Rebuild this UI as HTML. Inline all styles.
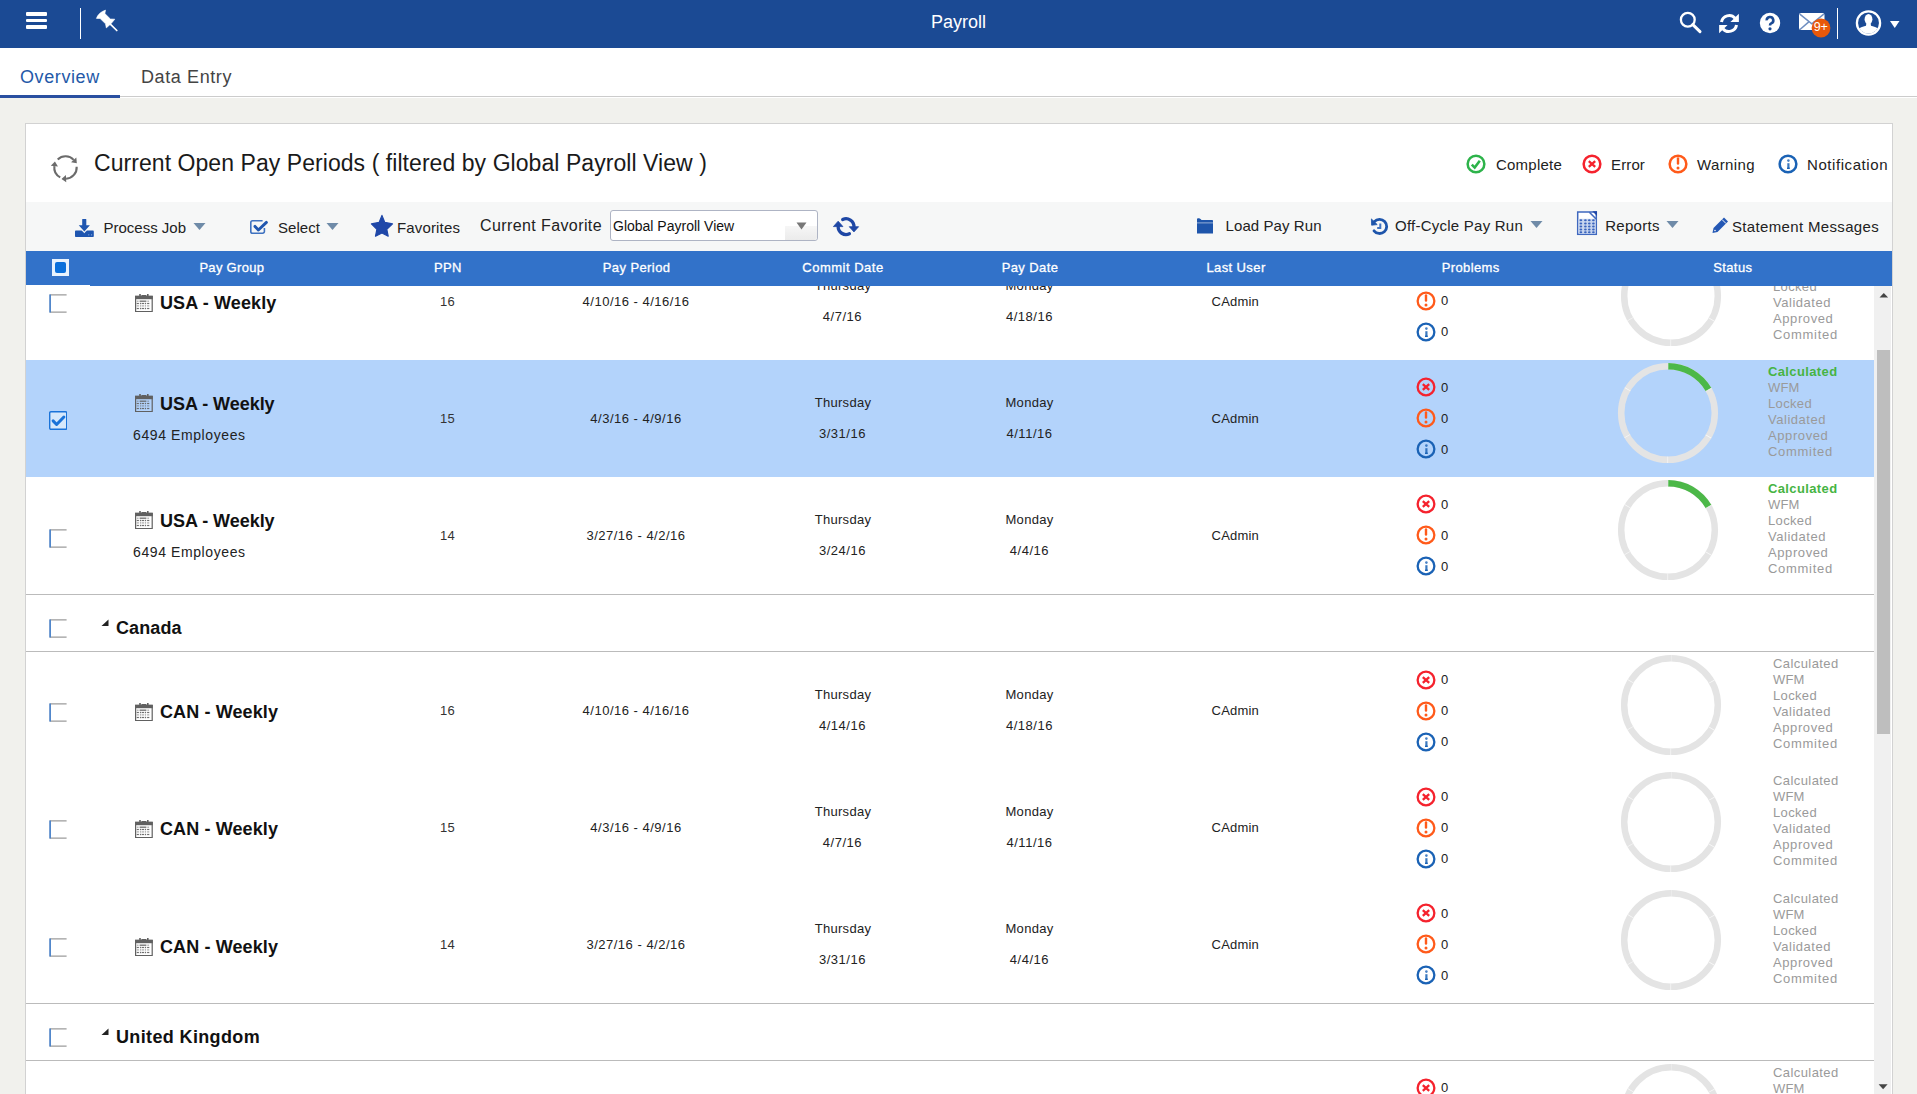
<!DOCTYPE html>
<html><head><meta charset="utf-8"><title>Payroll</title>
<style>
html,body{margin:0;padding:0;}
body{width:1917px;height:1094px;position:relative;overflow:hidden;background:#F1F1ED;font-family:"Liberation Sans", sans-serif;}
.t{position:absolute;white-space:pre;font-family:"Liberation Sans", sans-serif;}
.r{position:absolute;display:block;}
</style></head><body>
<div class="r" style="left:0px;top:0px;width:1917px;height:48px;background:#1B4A94;"></div><div class="r" style="left:26px;top:12px;width:21px;height:3.8px;background:#FFFFFF;border-radius:1px;"></div><div class="r" style="left:26px;top:18.8px;width:21px;height:3.6px;background:#FFFFFF;border-radius:1px;"></div><div class="r" style="left:26px;top:25.2px;width:21px;height:3.8px;background:#FFFFFF;border-radius:1px;"></div><div class="r" style="left:80px;top:8px;width:1px;height:31px;background:#FFFFFF;"></div><svg class="r" style="left:92px;top:6px;" width="30" height="30" viewBox="0 0 30 30"><path d="M4.4 12.4Q6.5 6.6 13.5 4.1L12.9 7.6L18.4 13L22.8 13.2L19.2 17.6L14.3 21.9L13.5 17.8L8.1 12.5z" fill="#fff" stroke="#fff" stroke-width="0.6" stroke-linejoin="round"/><path d="M17.8 17.6L24.8 24.5" stroke="#fff" stroke-width="1.7" stroke-linecap="round"/></svg><div class="t" style="left:858.50px;top:12.76px;width:200px;text-align:center;font-size:18px;line-height:18px;color:#FFFFFF;font-weight:normal;letter-spacing:0px;">Payroll</div><svg class="r" style="left:1678px;top:10px;" width="26" height="26" viewBox="0 0 26 26"><circle cx="9.8" cy="9.7" r="6.9" fill="none" stroke="#fff" stroke-width="2.3"/><path d="M14.8 14.6l7.2 7" stroke="#fff" stroke-width="3" stroke-linecap="round"/></svg><svg class="r" style="left:1716px;top:11px;" width="26" height="26" viewBox="0 0 26 26"><g transform="translate(13 12.5) scale(0.94) translate(-13 -13)"><g fill="none" stroke="#fff" stroke-width="3.2"><path d="M5 11.5A8.3 8.3 0 0 1 19.5 7.5"/><path d="M21 14.5A8.3 8.3 0 0 1 6.5 18.5"/></g><path d="M23.5 2.5v9h-9z" fill="#fff"/><path d="M2.5 23.5v-9h9z" fill="#fff"/></g></svg><svg class="r" style="left:1758px;top:11px;" width="24" height="24" viewBox="0 0 24 24"><circle cx="12" cy="12" r="10.2" fill="#fff"/><path d="M8.7 9.4a3.3 3.3 0 1 1 4.5 3c-1 .5-1.2 1.1-1.2 2.1" fill="none" stroke="#1B4A94" stroke-width="2.6"/><circle cx="12" cy="17.8" r="1.6" fill="#1B4A94"/></svg><svg class="r" style="left:1797px;top:11px;" width="30" height="22" viewBox="0 0 30 22"><rect x="2" y="2" width="25.5" height="17" rx="2" fill="#fff"/><path d="M2.8 3.2l12 9.6 12-9.6M3 18.5l8.8-7.6M27 18.5l-8.8-7.6" fill="none" stroke="#4A72B0" stroke-width="1.5" opacity="0.8"/></svg><svg class="r" style="left:1811px;top:18px;" width="20" height="20" viewBox="0 0 20 20"><circle cx="10" cy="10" r="9.4" fill="#E8580A"/></svg><div class="t" style="left:1805.60px;top:21.22px;width:30px;text-align:center;font-size:12.5px;line-height:12.5px;color:#FFFFFF;font-weight:normal;letter-spacing:-0.3px;">9+</div><div class="r" style="left:1837px;top:8px;width:1px;height:31px;background:#FFFFFF;"></div><svg class="r" style="left:1854px;top:9px;" width="30" height="30" viewBox="0 0 30 30"><defs><clipPath id="uc"><circle cx="14.5" cy="14" r="10.6"/></clipPath></defs><circle cx="14.5" cy="14" r="11.6" fill="none" stroke="#fff" stroke-width="2.3"/><g clip-path="url(#uc)" fill="#fff"><ellipse cx="14.5" cy="10.2" rx="3.9" ry="5.3"/><path d="M12.3 14.5h4.4l.3 2.2c3.5.8 6.5 2 8 3.5V30H4V20.2c1.5-1.5 4.5-2.7 8-3.5z"/></g></svg><svg class="r" style="left:1889px;top:20px;" width="12" height="9" viewBox="0 0 12 9"><path d="M1 1h9.5l-4.75 7z" fill="#fff"/></svg><div class="r" style="left:0px;top:48px;width:1917px;height:50px;background:#FFFFFF;"></div><div class="r" style="left:0px;top:96px;width:1917px;height:1px;background:#CCCCCC;"></div><div class="r" style="left:0px;top:95px;width:120px;height:3px;background:#2A4FA0;"></div><div class="t" style="left:20.00px;top:68.46px;font-size:18px;line-height:18px;color:#2459A8;font-weight:normal;letter-spacing:0.6px;">Overview</div><div class="t" style="left:141.00px;top:68.46px;font-size:18px;line-height:18px;color:#444444;font-weight:normal;letter-spacing:0.6px;">Data Entry</div><div class="r" style="left:25px;top:123px;width:1868px;height:1000px;background:#FFFFFF;box-sizing:border-box;border:1px solid #D2D2D2;"></div><svg class="r" style="left:45px;top:147px;" width="42" height="42" viewBox="0 0 42 42"><path d="M12.72 12.44A11.2 11.2 0 0 1 28.69 12.86" fill="none" stroke="#6B6B6B" stroke-width="2.1"/><path d="M31.32 10.41L31.83 16.23L26.06 15.32z" fill="#6B6B6B"/><path d="M31.67 19.72A11.2 11.2 0 0 1 21.09 31.68" fill="none" stroke="#6B6B6B" stroke-width="2.1"/><path d="M21.27 35.28L16.49 31.93L20.90 28.09z" fill="#6B6B6B"/><path d="M15.24 30.39A11.2 11.2 0 0 1 9.38 19.14" fill="none" stroke="#6B6B6B" stroke-width="2.1"/><path d="M5.81 18.70L9.94 14.57L12.96 19.57z" fill="#6B6B6B"/></svg><div class="t" style="left:94.00px;top:151.53px;font-size:23px;line-height:23px;color:#1A1A1A;font-weight:normal;letter-spacing:0.06px;">Current Open Pay Periods ( filtered by Global Payroll View )</div><svg class="r" style="left:1465.7px;top:153.8px;" width="20" height="20" viewBox="0 0 20 20"><circle cx="10" cy="10" r="8.35" fill="none" stroke="#2DB34A" stroke-width="2.5"/><path d="M5.8 10.6l2.9 3 5.1-6.8" fill="none" stroke="#2DB34A" stroke-width="2.6"/></svg><div class="t" style="left:1496.00px;top:157.30px;font-size:15px;line-height:15px;color:#222;font-weight:normal;letter-spacing:0.22px;">Complete</div><svg class="r" style="left:1581.9px;top:153.9px;" width="20" height="20" viewBox="0 0 20 20"><circle cx="10" cy="10" r="8.35" fill="none" stroke="#F5222D" stroke-width="2.5"/><path d="M6.8 7.1l6.4 5.8M13.2 7.1l-6.4 5.8" fill="none" stroke="#F5222D" stroke-width="2.3"/></svg><div class="t" style="left:1611.00px;top:157.30px;font-size:15px;line-height:15px;color:#222;font-weight:normal;letter-spacing:0.13px;">Error</div><svg class="r" style="left:1668.4px;top:153.8px;" width="20" height="20" viewBox="0 0 20 20"><circle cx="10" cy="10" r="8.35" fill="none" stroke="#FF5A1A" stroke-width="2.5"/><path d="M10 4.4v5.2" stroke="#FF5A1A" stroke-width="2.4" stroke-linecap="round"/><circle cx="10" cy="14.1" r="1.5" fill="#FF5A1A"/></svg><div class="t" style="left:1697.00px;top:157.30px;font-size:15px;line-height:15px;color:#222;font-weight:normal;letter-spacing:0.38px;">Warning</div><svg class="r" style="left:1777.5px;top:153.8px;" width="20" height="20" viewBox="0 0 20 20"><circle cx="10" cy="10" r="8.35" fill="none" stroke="#1A62B5" stroke-width="2.5"/><circle cx="10.4" cy="6.6" r="1.3" fill="#1A62B5" opacity="0.8"/><path d="M10.4 9.2v5" stroke="#1A62B5" stroke-width="2.2" opacity="0.85"/><path d="M9 14.3h2.8" stroke="#1A62B5" stroke-width="1.4"/></svg><div class="t" style="left:1807.00px;top:157.30px;font-size:15px;line-height:15px;color:#222;font-weight:normal;letter-spacing:0.57px;">Notification</div><div class="r" style="left:26px;top:202px;width:1866px;height:49px;background:#F6F7F7;"></div><svg class="r" style="left:70px;top:212px;" width="30" height="30" viewBox="0 0 30 30"><path d="M12.6 6.9h3.3a.4.4 0 0 1 .4.4v6h3.6l-5.55 6.2-5.6-6.2h3.45v-6a.4.4 0 0 1 .4-.4z" fill="#1F56B0"/><path d="M5.8 18.6h5c.9 0 1.5.5 2 1l1.5 1.6 1.5-1.6c.5-.5 1.1-1 2-1h5.2a.8.8 0 0 1 .8.8v4.9a.8.8 0 0 1-.8.8H5.8a.8.8 0 0 1-.8-.8v-4.9a.8.8 0 0 1 .8-.8z" fill="#1F56B0"/><circle cx="18.8" cy="22.8" r=".6" fill="#8FB0E0"/><circle cx="21.6" cy="22.8" r=".6" fill="#8FB0E0"/></svg><div class="t" style="left:103.50px;top:220.30px;font-size:15px;line-height:15px;color:#222;font-weight:normal;letter-spacing:0px;">Process Job</div><svg class="r" style="left:193px;top:222px;" width="13" height="9" viewBox="0 0 13 9"><path d="M0.5 1h12l-6 7z" fill="#6F8BA8"/></svg><svg class="r" style="left:245px;top:212px;" width="30" height="30" viewBox="0 0 30 30"><path d="M17.6 8.8H7.6a1.8 1.8 0 0 0-1.8 1.8v8.8a1.8 1.8 0 0 0 1.8 1.8h10a1.8 1.8 0 0 0 1.8-1.8v-3.4" fill="none" stroke="#3F72C0" stroke-width="1.6"/><path d="M10 14.4l3.4 3.6 8-7.6" fill="none" stroke="#1F56B0" stroke-width="2.9" stroke-linecap="round" stroke-linejoin="round"/></svg><div class="t" style="left:278.00px;top:220.30px;font-size:15px;line-height:15px;color:#222;font-weight:normal;letter-spacing:0.05px;">Select</div><svg class="r" style="left:326px;top:222px;" width="13" height="9" viewBox="0 0 13 9"><path d="M0.5 1h12l-6 7z" fill="#6F8BA8"/></svg><svg class="r" style="left:365px;top:208px;" width="35" height="35" viewBox="0 0 35 35"><path d="M16.95 7.4L19.7 14.3L27.5 15.9L21.8 21.3L23.2 28.2L16.95 25L10.5 28.2L11.9 21.3L6.4 15.9L14.2 14.3z" fill="#1F47A8" stroke="#1F47A8" stroke-width="1.2" stroke-linejoin="round"/></svg><div class="t" style="left:397.00px;top:220.30px;font-size:15px;line-height:15px;color:#222;font-weight:normal;letter-spacing:0.15px;">Favorites</div><div class="t" style="left:480.00px;top:218.46px;font-size:16px;line-height:16px;color:#222;font-weight:normal;letter-spacing:0.4px;">Current Favorite</div><div class="r" style="left:610px;top:210px;width:208px;height:31px;background:#FFFFFF;box-sizing:border-box;border:1px solid #AEB4C4;border-radius:3px;"></div><div class="r" style="left:785px;top:226px;width:32px;height:14px;background:linear-gradient(#F6F6F6,#EBEBEB);border-radius:0 0 3px 0;"></div><svg class="r" style="left:796px;top:221px;" width="11" height="9" viewBox="0 0 11 9"><path d="M0.5 1.5h10l-5 7z" fill="#777"/></svg><div class="t" style="left:613.00px;top:218.55px;font-size:14px;line-height:14px;color:#111;font-weight:normal;letter-spacing:0px;">Global Payroll View</div><svg class="r" style="left:825px;top:210px;" width="40" height="32" viewBox="0 0 40 32"><g fill="none" stroke="#1E47A5" stroke-width="3.3" stroke-linecap="round"><path d="M17.7 9.5A7.9 7.9 0 0 1 28.95 16.9"/><path d="M24.4 23.8A7.9 7.9 0 0 1 13.15 16.4"/></g><path d="M24.3 16.7L33.6 16.7L28.95 21.9z" fill="#1E47A5" stroke="#1E47A5" stroke-width="0.8" stroke-linejoin="round"/><path d="M8.4 16.6L17.9 16.6L13.15 11.2z" fill="#1E47A5" stroke="#1E47A5" stroke-width="0.8" stroke-linejoin="round"/></svg><svg class="r" style="left:1190px;top:210px;" width="30" height="30" viewBox="0 0 30 30"><path d="M7 9.2Q7 8.2 8 8.2H8.8Q9.8 8.2 10.8 9.3L11.5 10H22.2Q23 10 23 10.8V23.5H7z" fill="#1E55AB"/><rect x="7" y="12.2" width="16" height="1.3" fill="#FFFFFF" opacity="0.4"/></svg><div class="t" style="left:1225.60px;top:218.40px;font-size:15px;line-height:15px;color:#222;font-weight:normal;letter-spacing:0.08px;">Load Pay Run</div><svg class="r" style="left:1365px;top:210px;" width="30" height="30" viewBox="0 0 30 30"><path d="M9.01 20.77A7.1 7.1 0 1 0 9.32 11.65" fill="none" stroke="#1E55AB" stroke-width="2.8" stroke-linecap="round"/><path d="M6.4 8.9L6.6 15.2L12.2 14.6z" fill="#1E55AB" stroke="#1E55AB" stroke-width="0.8" stroke-linejoin="round"/><path d="M15.3 13.6V17.9H12.2" fill="none" stroke="#3F72C0" stroke-width="2"/></svg><div class="t" style="left:1395.00px;top:218.40px;font-size:15px;line-height:15px;color:#222;font-weight:normal;letter-spacing:0.24px;">Off-Cycle Pay Run</div><svg class="r" style="left:1530px;top:220px;" width="13" height="9" viewBox="0 0 13 9"><path d="M0.5 1h12l-6 7z" fill="#6F8BA8"/></svg><svg class="r" style="left:1572px;top:208px;" width="30" height="30" viewBox="0 0 30 30"><rect x="5.7" y="4" width="18.6" height="22.3" fill="#FFFFFF" stroke="#3F68BF" stroke-width="1.5"/><rect x="6.5" y="10.8" width="17.1" height="14.8" fill="#C6D4EE"/><path d="M17.4 4.3L24.1 11" stroke="#3F68BF" stroke-width="1.6"/><path d="M20.4 3.3H25V8z" fill="#1F47A8"/><ellipse cx="8.9" cy="12.3" rx="1.35" ry="0.95" fill="#3A64BD"/><ellipse cx="8.9" cy="15.5" rx="1.35" ry="0.95" fill="#3A64BD"/><ellipse cx="8.9" cy="18.5" rx="1.35" ry="0.95" fill="#3A64BD"/><ellipse cx="8.9" cy="21.5" rx="1.35" ry="0.95" fill="#3A64BD"/><ellipse cx="8.9" cy="24.3" rx="1.35" ry="0.95" fill="#3A64BD"/><ellipse cx="13.4" cy="12.3" rx="1.35" ry="0.95" fill="#3A64BD"/><ellipse cx="13.4" cy="15.5" rx="1.35" ry="0.95" fill="#3A64BD"/><ellipse cx="13.4" cy="18.5" rx="1.35" ry="0.95" fill="#3A64BD"/><ellipse cx="13.4" cy="21.5" rx="1.35" ry="0.95" fill="#3A64BD"/><ellipse cx="13.4" cy="24.3" rx="1.35" ry="0.95" fill="#3A64BD"/><ellipse cx="17.3" cy="12.3" rx="1.35" ry="0.95" fill="#3A64BD"/><ellipse cx="17.3" cy="15.5" rx="1.35" ry="0.95" fill="#3A64BD"/><ellipse cx="17.3" cy="18.5" rx="1.35" ry="0.95" fill="#3A64BD"/><ellipse cx="17.3" cy="21.5" rx="1.35" ry="0.95" fill="#3A64BD"/><ellipse cx="17.3" cy="24.3" rx="1.35" ry="0.95" fill="#3A64BD"/><ellipse cx="21.4" cy="12.3" rx="1.35" ry="0.95" fill="#3A64BD"/><ellipse cx="21.4" cy="15.5" rx="1.35" ry="0.95" fill="#3A64BD"/><ellipse cx="21.4" cy="18.5" rx="1.35" ry="0.95" fill="#3A64BD"/><ellipse cx="21.4" cy="21.5" rx="1.35" ry="0.95" fill="#3A64BD"/><ellipse cx="21.4" cy="24.3" rx="1.35" ry="0.95" fill="#3A64BD"/></svg><div class="t" style="left:1605.20px;top:218.30px;font-size:15px;line-height:15px;color:#222;font-weight:normal;letter-spacing:0.28px;">Reports</div><svg class="r" style="left:1666px;top:220px;" width="13" height="9" viewBox="0 0 13 9"><path d="M0.5 1h12l-6 7z" fill="#6F8BA8"/></svg><svg class="r" style="left:1711px;top:216px;" width="19" height="18" viewBox="0 0 19 18"><path d="M13 1.5l4 4L6.5 16 1.5 17 2.5 12z" fill="#2458B5"/><path d="M11 3.5l4 4" stroke="#F5F6F7" stroke-width="1"/><circle cx="4" cy="14.5" r="0.8" fill="#F5F6F7"/></svg><div class="t" style="left:1732.00px;top:219.30px;font-size:15px;line-height:15px;color:#222;font-weight:normal;letter-spacing:0.34px;">Statement Messages</div><div class="r" style="left:26px;top:251px;width:1866px;height:35px;background:#3272C9;"></div><div class="r" style="left:26px;top:285px;width:64px;height:1px;background:#FFFFFF;"></div><svg class="r" style="left:52px;top:259px;" width="17" height="17" viewBox="0 0 17 17"><rect x="0" y="0" width="17" height="17" fill="#E8F2FD"/><rect x="3" y="3" width="11" height="11" rx="2" fill="#0A6FDB"/></svg><div class="t" style="left:131.80px;top:260.80px;width:200px;text-align:center;font-size:13px;line-height:13px;color:#FFFFFF;font-weight:normal;letter-spacing:0.3px;-webkit-text-stroke:0.3px #fff;">Pay Group</div><div class="t" style="left:347.90px;top:260.80px;width:200px;text-align:center;font-size:13px;line-height:13px;color:#FFFFFF;font-weight:normal;letter-spacing:0.4px;-webkit-text-stroke:0.3px #fff;">PPN</div><div class="t" style="left:536.60px;top:260.80px;width:200px;text-align:center;font-size:13px;line-height:13px;color:#FFFFFF;font-weight:normal;letter-spacing:0.4px;-webkit-text-stroke:0.3px #fff;">Pay Period</div><div class="t" style="left:743.00px;top:260.80px;width:200px;text-align:center;font-size:13px;line-height:13px;color:#FFFFFF;font-weight:normal;letter-spacing:0.5px;-webkit-text-stroke:0.3px #fff;">Commit Date</div><div class="t" style="left:930.00px;top:260.80px;width:200px;text-align:center;font-size:13px;line-height:13px;color:#FFFFFF;font-weight:normal;letter-spacing:0.4px;-webkit-text-stroke:0.3px #fff;">Pay Date</div><div class="t" style="left:1136.00px;top:260.80px;width:200px;text-align:center;font-size:13px;line-height:13px;color:#FFFFFF;font-weight:normal;letter-spacing:0.4px;-webkit-text-stroke:0.3px #fff;">Last User</div><div class="t" style="left:1370.70px;top:260.80px;width:200px;text-align:center;font-size:13px;line-height:13px;color:#FFFFFF;font-weight:normal;letter-spacing:0.4px;-webkit-text-stroke:0.3px #fff;">Problems</div><div class="t" style="left:1632.80px;top:260.80px;width:200px;text-align:center;font-size:13px;line-height:13px;color:#FFFFFF;font-weight:normal;letter-spacing:0.4px;-webkit-text-stroke:0.3px #fff;">Status</div><div class="r" style="left:0px;top:286px;width:1874px;height:808px;overflow:hidden;"><svg class="r" style="left:49px;top:7.5px;" width="18" height="19" viewBox="0 0 18 19"><path d="M17.6 0.9H1.2V18.1H17.6" fill="none" stroke="#9C9C9C" stroke-width="1.1"/><path d="M1.1 0.6v17.8" stroke="#3F7FCF" stroke-width="1.5"/></svg><svg class="r" style="left:135px;top:8px;" width="18" height="18" viewBox="0 0 18 18"><rect x="0.6" y="2.4" width="16.6" height="15.2" fill="none" stroke="#606060" stroke-width="1.2"/><rect x="0" y="1.8" width="17.8" height="3.4" fill="#606060"/><rect x="4.2" y="0" width="1.6" height="3" fill="#606060"/><rect x="12" y="0" width="1.6" height="3" fill="#606060"/><rect x="6.5" y="1" width="4.8" height="2" fill="#606060"/><rect x="1.8" y="6.6" width="1.8" height="1.2" fill="#606060" opacity="0.55"/><rect x="4.6" y="6.5" width="6.8" height="1.4" fill="#606060" opacity="0.85"/><rect x="12.3" y="6.6" width="1.8" height="1.2" fill="#606060" opacity="0.55"/><rect x="1.7" y="8.9" width="2.2" height="1.2" fill="#606060" opacity="0.9"/><rect x="6.8" y="8.9" width="2.2" height="1.2" fill="#606060" opacity="0.9"/><rect x="12.1" y="8.9" width="2.2" height="1.2" fill="#606060" opacity="0.9"/><rect x="4.9" y="8.8" width="1.3" height="1.4" fill="#606060" opacity="0.9"/><rect x="9.8" y="8.8" width="1.3" height="1.4" fill="#606060" opacity="0.9"/><rect x="1.7" y="11.3" width="2.2" height="1.2" fill="#606060" opacity="0.55"/><rect x="6.8" y="11.3" width="2.2" height="1.2" fill="#606060" opacity="0.55"/><rect x="12.1" y="11.3" width="2.2" height="1.2" fill="#606060" opacity="0.55"/><rect x="4.9" y="11.200000000000001" width="1.3" height="1.4" fill="#606060" opacity="0.55"/><rect x="9.8" y="11.200000000000001" width="1.3" height="1.4" fill="#606060" opacity="0.55"/><rect x="1.7" y="13.9" width="2.2" height="1.2" fill="#606060" opacity="0.9"/><rect x="6.8" y="13.9" width="2.2" height="1.2" fill="#606060" opacity="0.9"/><rect x="12.1" y="13.9" width="2.2" height="1.2" fill="#606060" opacity="0.9"/><rect x="4.9" y="13.8" width="1.3" height="1.4" fill="#606060" opacity="0.9"/><rect x="9.8" y="13.8" width="1.3" height="1.4" fill="#606060" opacity="0.9"/></svg><div class="t" style="left:160.00px;top:7.76px;font-size:18px;line-height:18px;color:#111;font-weight:bold;letter-spacing:0.11px;">USA - Weekly</div><div class="t" style="left:397.50px;top:8.50px;width:100px;text-align:center;font-size:13px;line-height:13px;color:#333;font-weight:normal;letter-spacing:0.3px;">16</div><div class="t" style="left:536.00px;top:8.50px;width:200px;text-align:center;font-size:13px;line-height:13px;color:#222;font-weight:normal;letter-spacing:0.5px;">4/10/16 - 4/16/16</div><div class="t" style="left:743.00px;top:-7.50px;width:200px;text-align:center;font-size:13px;line-height:13px;color:#222;font-weight:normal;letter-spacing:0.29px;">Thursday</div><div class="t" style="left:742.50px;top:23.50px;width:200px;text-align:center;font-size:13px;line-height:13px;color:#222;font-weight:normal;letter-spacing:0.52px;">4/7/16</div><div class="t" style="left:929.50px;top:-7.50px;width:200px;text-align:center;font-size:13px;line-height:13px;color:#222;font-weight:normal;letter-spacing:0.3px;">Monday</div><div class="t" style="left:929.50px;top:23.50px;width:200px;text-align:center;font-size:13px;line-height:13px;color:#222;font-weight:normal;letter-spacing:0.52px;">4/18/16</div><div class="t" style="left:1135.30px;top:8.50px;width:200px;text-align:center;font-size:13px;line-height:13px;color:#222;font-weight:normal;letter-spacing:0.19px;">CAdmin</div><svg class="r" style="left:1416px;top:-26.0px;" width="20" height="20" viewBox="0 0 20 20"><circle cx="10" cy="10" r="8.35" fill="none" stroke="#F5222D" stroke-width="2.3"/><path d="M6.8 7.1l6.4 5.8M13.2 7.1l-6.4 5.8" fill="none" stroke="#F5222D" stroke-width="2.3"/></svg><div class="t" style="left:1441.00px;top:-23.00px;font-size:13px;line-height:13px;color:#222;font-weight:normal;letter-spacing:0px;">0</div><svg class="r" style="left:1416px;top:5.0px;" width="20" height="20" viewBox="0 0 20 20"><circle cx="10" cy="10" r="8.35" fill="none" stroke="#FF5A1A" stroke-width="2.3"/><path d="M10 4.4v5.2" stroke="#FF5A1A" stroke-width="2.4" stroke-linecap="round"/><circle cx="10" cy="14.1" r="1.5" fill="#FF5A1A"/></svg><div class="t" style="left:1441.00px;top:8.00px;font-size:13px;line-height:13px;color:#222;font-weight:normal;letter-spacing:0px;">0</div><svg class="r" style="left:1416px;top:36.0px;" width="20" height="20" viewBox="0 0 20 20"><circle cx="10" cy="10" r="8.35" fill="none" stroke="#1A62B5" stroke-width="2.3"/><circle cx="10.4" cy="6.6" r="1.3" fill="#1A62B5" opacity="0.8"/><path d="M10.4 9.2v5" stroke="#1A62B5" stroke-width="2.2" opacity="0.85"/><path d="M9 14.3h2.8" stroke="#1A62B5" stroke-width="1.4"/></svg><div class="t" style="left:1441.00px;top:39.00px;font-size:13px;line-height:13px;color:#222;font-weight:normal;letter-spacing:0px;">0</div><svg class="r" style="left:1619px;top:-42px;" width="104" height="104" viewBox="0 0 104 104"><g transform="rotate(-90 52 52)"><circle cx="52" cy="52" r="46.8" fill="none" stroke="#E4E4E4" stroke-width="6.5"/><circle cx="52" cy="52" r="46.8" fill="none" stroke="#FFFFFF" stroke-opacity="0.75" stroke-width="6.6" stroke-dasharray="0.7 48.31" stroke-dashoffset="0.35"/></g></svg><div class="t" style="left:1773.00px;top:-38.00px;font-size:13px;line-height:13px;color:#9A9A9A;font-weight:normal;letter-spacing:0.42px;">Calculated</div><div class="t" style="left:1773.00px;top:-22.00px;font-size:13px;line-height:13px;color:#9A9A9A;font-weight:normal;letter-spacing:0.18px;">WFM</div><div class="t" style="left:1773.00px;top:-6.00px;font-size:13px;line-height:13px;color:#9A9A9A;font-weight:normal;letter-spacing:0.35px;">Locked</div><div class="t" style="left:1773.00px;top:10.00px;font-size:13px;line-height:13px;color:#9A9A9A;font-weight:normal;letter-spacing:0.53px;">Validated</div><div class="t" style="left:1773.00px;top:26.00px;font-size:13px;line-height:13px;color:#9A9A9A;font-weight:normal;letter-spacing:0.6px;">Approved</div><div class="t" style="left:1773.00px;top:42.00px;font-size:13px;line-height:13px;color:#9A9A9A;font-weight:normal;letter-spacing:0.71px;">Commited</div><div class="r" style="left:26px;top:74px;width:1848px;height:117px;background:#B3D3FB;"></div><svg class="r" style="left:49px;top:125px;" width="18" height="19" viewBox="0 0 18 19"><rect x="0.7" y="0.7" width="17" height="17.6" rx="1.2" fill="#D6E8FB" stroke="#1A73D9" stroke-width="1.4"/><path d="M4.1 9.9l3.5 3.6 7.3-7.5" fill="none" stroke="#1A73D9" stroke-width="3" stroke-linecap="round" stroke-linejoin="round"/></svg><svg class="r" style="left:135px;top:108px;" width="18" height="18" viewBox="0 0 18 18"><rect x="0.6" y="2.4" width="16.6" height="15.2" fill="none" stroke="#606060" stroke-width="1.2"/><rect x="0" y="1.8" width="17.8" height="3.4" fill="#606060"/><rect x="4.2" y="0" width="1.6" height="3" fill="#606060"/><rect x="12" y="0" width="1.6" height="3" fill="#606060"/><rect x="6.5" y="1" width="4.8" height="2" fill="#606060"/><rect x="1.8" y="6.6" width="1.8" height="1.2" fill="#606060" opacity="0.55"/><rect x="4.6" y="6.5" width="6.8" height="1.4" fill="#606060" opacity="0.85"/><rect x="12.3" y="6.6" width="1.8" height="1.2" fill="#606060" opacity="0.55"/><rect x="1.7" y="8.9" width="2.2" height="1.2" fill="#606060" opacity="0.9"/><rect x="6.8" y="8.9" width="2.2" height="1.2" fill="#606060" opacity="0.9"/><rect x="12.1" y="8.9" width="2.2" height="1.2" fill="#606060" opacity="0.9"/><rect x="4.9" y="8.8" width="1.3" height="1.4" fill="#606060" opacity="0.9"/><rect x="9.8" y="8.8" width="1.3" height="1.4" fill="#606060" opacity="0.9"/><rect x="1.7" y="11.3" width="2.2" height="1.2" fill="#606060" opacity="0.55"/><rect x="6.8" y="11.3" width="2.2" height="1.2" fill="#606060" opacity="0.55"/><rect x="12.1" y="11.3" width="2.2" height="1.2" fill="#606060" opacity="0.55"/><rect x="4.9" y="11.200000000000001" width="1.3" height="1.4" fill="#606060" opacity="0.55"/><rect x="9.8" y="11.200000000000001" width="1.3" height="1.4" fill="#606060" opacity="0.55"/><rect x="1.7" y="13.9" width="2.2" height="1.2" fill="#606060" opacity="0.9"/><rect x="6.8" y="13.9" width="2.2" height="1.2" fill="#606060" opacity="0.9"/><rect x="12.1" y="13.9" width="2.2" height="1.2" fill="#606060" opacity="0.9"/><rect x="4.9" y="13.8" width="1.3" height="1.4" fill="#606060" opacity="0.9"/><rect x="9.8" y="13.8" width="1.3" height="1.4" fill="#606060" opacity="0.9"/></svg><div class="t" style="left:160.00px;top:108.76px;font-size:18px;line-height:18px;color:#111;font-weight:bold;letter-spacing:-0.04px;">USA - Weekly</div><div class="t" style="left:133.00px;top:141.75px;font-size:14px;line-height:14px;color:#222;font-weight:normal;letter-spacing:0.6px;">6494 Employees</div><div class="t" style="left:397.50px;top:125.50px;width:100px;text-align:center;font-size:13px;line-height:13px;color:#333;font-weight:normal;letter-spacing:0.3px;">15</div><div class="t" style="left:536.00px;top:125.50px;width:200px;text-align:center;font-size:13px;line-height:13px;color:#222;font-weight:normal;letter-spacing:0.5px;">4/3/16 - 4/9/16</div><div class="t" style="left:743.00px;top:109.50px;width:200px;text-align:center;font-size:13px;line-height:13px;color:#222;font-weight:normal;letter-spacing:0.29px;">Thursday</div><div class="t" style="left:742.50px;top:140.50px;width:200px;text-align:center;font-size:13px;line-height:13px;color:#222;font-weight:normal;letter-spacing:0.52px;">3/31/16</div><div class="t" style="left:929.50px;top:109.50px;width:200px;text-align:center;font-size:13px;line-height:13px;color:#222;font-weight:normal;letter-spacing:0.3px;">Monday</div><div class="t" style="left:929.50px;top:140.50px;width:200px;text-align:center;font-size:13px;line-height:13px;color:#222;font-weight:normal;letter-spacing:0.52px;">4/11/16</div><div class="t" style="left:1135.30px;top:125.50px;width:200px;text-align:center;font-size:13px;line-height:13px;color:#222;font-weight:normal;letter-spacing:0.19px;">CAdmin</div><svg class="r" style="left:1416px;top:91.30000000000001px;" width="20" height="20" viewBox="0 0 20 20"><circle cx="10" cy="10" r="8.35" fill="none" stroke="#F5222D" stroke-width="2.3"/><path d="M6.8 7.1l6.4 5.8M13.2 7.1l-6.4 5.8" fill="none" stroke="#F5222D" stroke-width="2.3"/></svg><div class="t" style="left:1441.00px;top:95.00px;font-size:13px;line-height:13px;color:#222;font-weight:normal;letter-spacing:0px;">0</div><svg class="r" style="left:1416px;top:122.30000000000001px;" width="20" height="20" viewBox="0 0 20 20"><circle cx="10" cy="10" r="8.35" fill="none" stroke="#FF5A1A" stroke-width="2.3"/><path d="M10 4.4v5.2" stroke="#FF5A1A" stroke-width="2.4" stroke-linecap="round"/><circle cx="10" cy="14.1" r="1.5" fill="#FF5A1A"/></svg><div class="t" style="left:1441.00px;top:126.00px;font-size:13px;line-height:13px;color:#222;font-weight:normal;letter-spacing:0px;">0</div><svg class="r" style="left:1416px;top:153.3px;" width="20" height="20" viewBox="0 0 20 20"><circle cx="10" cy="10" r="8.35" fill="none" stroke="#1A62B5" stroke-width="2.3"/><circle cx="10.4" cy="6.6" r="1.3" fill="#1A62B5" opacity="0.8"/><path d="M10.4 9.2v5" stroke="#1A62B5" stroke-width="2.2" opacity="0.85"/><path d="M9 14.3h2.8" stroke="#1A62B5" stroke-width="1.4"/></svg><div class="t" style="left:1441.00px;top:157.00px;font-size:13px;line-height:13px;color:#222;font-weight:normal;letter-spacing:0px;">0</div><svg class="r" style="left:1616px;top:75px;" width="104" height="104" viewBox="0 0 104 104"><g transform="rotate(-90 52 52)"><circle cx="52" cy="52" r="46.8" fill="none" stroke="#E4E4E4" stroke-width="6.5"/><circle cx="52" cy="52" r="46.8" fill="none" stroke="#4CB848" stroke-width="6.5" stroke-dasharray="49.01 294.05" stroke-dashoffset="0"/><circle cx="52" cy="52" r="46.8" fill="none" stroke="#FFFFFF" stroke-opacity="0.75" stroke-width="6.6" stroke-dasharray="0.7 48.31" stroke-dashoffset="0.35"/></g></svg><div class="t" style="left:1768.00px;top:78.70px;font-size:13px;line-height:13px;color:#46B443;font-weight:bold;letter-spacing:0.37px;">Calculated</div><div class="t" style="left:1768.00px;top:94.70px;font-size:13px;line-height:13px;color:#9A9A9A;font-weight:normal;letter-spacing:0.18px;">WFM</div><div class="t" style="left:1768.00px;top:110.70px;font-size:13px;line-height:13px;color:#9A9A9A;font-weight:normal;letter-spacing:0.35px;">Locked</div><div class="t" style="left:1768.00px;top:126.70px;font-size:13px;line-height:13px;color:#9A9A9A;font-weight:normal;letter-spacing:0.53px;">Validated</div><div class="t" style="left:1768.00px;top:142.70px;font-size:13px;line-height:13px;color:#9A9A9A;font-weight:normal;letter-spacing:0.6px;">Approved</div><div class="t" style="left:1768.00px;top:158.70px;font-size:13px;line-height:13px;color:#9A9A9A;font-weight:normal;letter-spacing:0.71px;">Commited</div><svg class="r" style="left:49px;top:242.5px;" width="18" height="19" viewBox="0 0 18 19"><path d="M17.6 0.9H1.2V18.1H17.6" fill="none" stroke="#9C9C9C" stroke-width="1.1"/><path d="M1.1 0.6v17.8" stroke="#3F7FCF" stroke-width="1.5"/></svg><svg class="r" style="left:135px;top:225px;" width="18" height="18" viewBox="0 0 18 18"><rect x="0.6" y="2.4" width="16.6" height="15.2" fill="none" stroke="#606060" stroke-width="1.2"/><rect x="0" y="1.8" width="17.8" height="3.4" fill="#606060"/><rect x="4.2" y="0" width="1.6" height="3" fill="#606060"/><rect x="12" y="0" width="1.6" height="3" fill="#606060"/><rect x="6.5" y="1" width="4.8" height="2" fill="#606060"/><rect x="1.8" y="6.6" width="1.8" height="1.2" fill="#606060" opacity="0.55"/><rect x="4.6" y="6.5" width="6.8" height="1.4" fill="#606060" opacity="0.85"/><rect x="12.3" y="6.6" width="1.8" height="1.2" fill="#606060" opacity="0.55"/><rect x="1.7" y="8.9" width="2.2" height="1.2" fill="#606060" opacity="0.9"/><rect x="6.8" y="8.9" width="2.2" height="1.2" fill="#606060" opacity="0.9"/><rect x="12.1" y="8.9" width="2.2" height="1.2" fill="#606060" opacity="0.9"/><rect x="4.9" y="8.8" width="1.3" height="1.4" fill="#606060" opacity="0.9"/><rect x="9.8" y="8.8" width="1.3" height="1.4" fill="#606060" opacity="0.9"/><rect x="1.7" y="11.3" width="2.2" height="1.2" fill="#606060" opacity="0.55"/><rect x="6.8" y="11.3" width="2.2" height="1.2" fill="#606060" opacity="0.55"/><rect x="12.1" y="11.3" width="2.2" height="1.2" fill="#606060" opacity="0.55"/><rect x="4.9" y="11.200000000000001" width="1.3" height="1.4" fill="#606060" opacity="0.55"/><rect x="9.8" y="11.200000000000001" width="1.3" height="1.4" fill="#606060" opacity="0.55"/><rect x="1.7" y="13.9" width="2.2" height="1.2" fill="#606060" opacity="0.9"/><rect x="6.8" y="13.9" width="2.2" height="1.2" fill="#606060" opacity="0.9"/><rect x="12.1" y="13.9" width="2.2" height="1.2" fill="#606060" opacity="0.9"/><rect x="4.9" y="13.8" width="1.3" height="1.4" fill="#606060" opacity="0.9"/><rect x="9.8" y="13.8" width="1.3" height="1.4" fill="#606060" opacity="0.9"/></svg><div class="t" style="left:160.00px;top:225.76px;font-size:18px;line-height:18px;color:#111;font-weight:bold;letter-spacing:-0.04px;">USA - Weekly</div><div class="t" style="left:133.00px;top:258.75px;font-size:14px;line-height:14px;color:#222;font-weight:normal;letter-spacing:0.6px;">6494 Employees</div><div class="t" style="left:397.50px;top:242.50px;width:100px;text-align:center;font-size:13px;line-height:13px;color:#333;font-weight:normal;letter-spacing:0.3px;">14</div><div class="t" style="left:536.00px;top:242.50px;width:200px;text-align:center;font-size:13px;line-height:13px;color:#222;font-weight:normal;letter-spacing:0.5px;">3/27/16 - 4/2/16</div><div class="t" style="left:743.00px;top:226.50px;width:200px;text-align:center;font-size:13px;line-height:13px;color:#222;font-weight:normal;letter-spacing:0.29px;">Thursday</div><div class="t" style="left:742.50px;top:257.50px;width:200px;text-align:center;font-size:13px;line-height:13px;color:#222;font-weight:normal;letter-spacing:0.52px;">3/24/16</div><div class="t" style="left:929.50px;top:226.50px;width:200px;text-align:center;font-size:13px;line-height:13px;color:#222;font-weight:normal;letter-spacing:0.3px;">Monday</div><div class="t" style="left:929.50px;top:257.50px;width:200px;text-align:center;font-size:13px;line-height:13px;color:#222;font-weight:normal;letter-spacing:0.52px;">4/4/16</div><div class="t" style="left:1135.30px;top:242.50px;width:200px;text-align:center;font-size:13px;line-height:13px;color:#222;font-weight:normal;letter-spacing:0.19px;">CAdmin</div><svg class="r" style="left:1416px;top:208.3px;" width="20" height="20" viewBox="0 0 20 20"><circle cx="10" cy="10" r="8.35" fill="none" stroke="#F5222D" stroke-width="2.3"/><path d="M6.8 7.1l6.4 5.8M13.2 7.1l-6.4 5.8" fill="none" stroke="#F5222D" stroke-width="2.3"/></svg><div class="t" style="left:1441.00px;top:212.00px;font-size:13px;line-height:13px;color:#222;font-weight:normal;letter-spacing:0px;">0</div><svg class="r" style="left:1416px;top:239.29999999999995px;" width="20" height="20" viewBox="0 0 20 20"><circle cx="10" cy="10" r="8.35" fill="none" stroke="#FF5A1A" stroke-width="2.3"/><path d="M10 4.4v5.2" stroke="#FF5A1A" stroke-width="2.4" stroke-linecap="round"/><circle cx="10" cy="14.1" r="1.5" fill="#FF5A1A"/></svg><div class="t" style="left:1441.00px;top:243.00px;font-size:13px;line-height:13px;color:#222;font-weight:normal;letter-spacing:0px;">0</div><svg class="r" style="left:1416px;top:270.29999999999995px;" width="20" height="20" viewBox="0 0 20 20"><circle cx="10" cy="10" r="8.35" fill="none" stroke="#1A62B5" stroke-width="2.3"/><circle cx="10.4" cy="6.6" r="1.3" fill="#1A62B5" opacity="0.8"/><path d="M10.4 9.2v5" stroke="#1A62B5" stroke-width="2.2" opacity="0.85"/><path d="M9 14.3h2.8" stroke="#1A62B5" stroke-width="1.4"/></svg><div class="t" style="left:1441.00px;top:274.00px;font-size:13px;line-height:13px;color:#222;font-weight:normal;letter-spacing:0px;">0</div><svg class="r" style="left:1616px;top:192px;" width="104" height="104" viewBox="0 0 104 104"><g transform="rotate(-90 52 52)"><circle cx="52" cy="52" r="46.8" fill="none" stroke="#E4E4E4" stroke-width="6.5"/><circle cx="52" cy="52" r="46.8" fill="none" stroke="#4CB848" stroke-width="6.5" stroke-dasharray="49.01 294.05" stroke-dashoffset="0"/><circle cx="52" cy="52" r="46.8" fill="none" stroke="#FFFFFF" stroke-opacity="0.75" stroke-width="6.6" stroke-dasharray="0.7 48.31" stroke-dashoffset="0.35"/></g></svg><div class="t" style="left:1768.00px;top:195.70px;font-size:13px;line-height:13px;color:#46B443;font-weight:bold;letter-spacing:0.37px;">Calculated</div><div class="t" style="left:1768.00px;top:211.70px;font-size:13px;line-height:13px;color:#9A9A9A;font-weight:normal;letter-spacing:0.18px;">WFM</div><div class="t" style="left:1768.00px;top:227.70px;font-size:13px;line-height:13px;color:#9A9A9A;font-weight:normal;letter-spacing:0.35px;">Locked</div><div class="t" style="left:1768.00px;top:243.70px;font-size:13px;line-height:13px;color:#9A9A9A;font-weight:normal;letter-spacing:0.53px;">Validated</div><div class="t" style="left:1768.00px;top:259.70px;font-size:13px;line-height:13px;color:#9A9A9A;font-weight:normal;letter-spacing:0.6px;">Approved</div><div class="t" style="left:1768.00px;top:275.70px;font-size:13px;line-height:13px;color:#9A9A9A;font-weight:normal;letter-spacing:0.71px;">Commited</div><div class="r" style="left:26px;top:308px;width:1848px;height:1px;background:#BBBBBB;"></div><svg class="r" style="left:49px;top:332.5px;" width="18" height="19" viewBox="0 0 18 19"><path d="M17.6 0.9H1.2V18.1H17.6" fill="none" stroke="#9C9C9C" stroke-width="1.1"/><path d="M1.1 0.6v17.8" stroke="#3F7FCF" stroke-width="1.5"/></svg><svg class="r" style="left:101px;top:333px;" width="8" height="8" viewBox="0 0 8 8"><path d="M7.5 0.5V7H0.5z" fill="#222"/></svg><div class="t" style="left:116.00px;top:332.76px;font-size:18px;line-height:18px;color:#111;font-weight:bold;letter-spacing:0.11px;">Canada</div><div class="r" style="left:26px;top:365px;width:1848px;height:1px;background:#BBBBBB;"></div><svg class="r" style="left:49px;top:416.5px;" width="18" height="19" viewBox="0 0 18 19"><path d="M17.6 0.9H1.2V18.1H17.6" fill="none" stroke="#9C9C9C" stroke-width="1.1"/><path d="M1.1 0.6v17.8" stroke="#3F7FCF" stroke-width="1.5"/></svg><svg class="r" style="left:135px;top:417px;" width="18" height="18" viewBox="0 0 18 18"><rect x="0.6" y="2.4" width="16.6" height="15.2" fill="none" stroke="#606060" stroke-width="1.2"/><rect x="0" y="1.8" width="17.8" height="3.4" fill="#606060"/><rect x="4.2" y="0" width="1.6" height="3" fill="#606060"/><rect x="12" y="0" width="1.6" height="3" fill="#606060"/><rect x="6.5" y="1" width="4.8" height="2" fill="#606060"/><rect x="1.8" y="6.6" width="1.8" height="1.2" fill="#606060" opacity="0.55"/><rect x="4.6" y="6.5" width="6.8" height="1.4" fill="#606060" opacity="0.85"/><rect x="12.3" y="6.6" width="1.8" height="1.2" fill="#606060" opacity="0.55"/><rect x="1.7" y="8.9" width="2.2" height="1.2" fill="#606060" opacity="0.9"/><rect x="6.8" y="8.9" width="2.2" height="1.2" fill="#606060" opacity="0.9"/><rect x="12.1" y="8.9" width="2.2" height="1.2" fill="#606060" opacity="0.9"/><rect x="4.9" y="8.8" width="1.3" height="1.4" fill="#606060" opacity="0.9"/><rect x="9.8" y="8.8" width="1.3" height="1.4" fill="#606060" opacity="0.9"/><rect x="1.7" y="11.3" width="2.2" height="1.2" fill="#606060" opacity="0.55"/><rect x="6.8" y="11.3" width="2.2" height="1.2" fill="#606060" opacity="0.55"/><rect x="12.1" y="11.3" width="2.2" height="1.2" fill="#606060" opacity="0.55"/><rect x="4.9" y="11.200000000000001" width="1.3" height="1.4" fill="#606060" opacity="0.55"/><rect x="9.8" y="11.200000000000001" width="1.3" height="1.4" fill="#606060" opacity="0.55"/><rect x="1.7" y="13.9" width="2.2" height="1.2" fill="#606060" opacity="0.9"/><rect x="6.8" y="13.9" width="2.2" height="1.2" fill="#606060" opacity="0.9"/><rect x="12.1" y="13.9" width="2.2" height="1.2" fill="#606060" opacity="0.9"/><rect x="4.9" y="13.8" width="1.3" height="1.4" fill="#606060" opacity="0.9"/><rect x="9.8" y="13.8" width="1.3" height="1.4" fill="#606060" opacity="0.9"/></svg><div class="t" style="left:160.00px;top:416.76px;font-size:18px;line-height:18px;color:#111;font-weight:bold;letter-spacing:0.11px;">CAN - Weekly</div><div class="t" style="left:397.50px;top:417.50px;width:100px;text-align:center;font-size:13px;line-height:13px;color:#333;font-weight:normal;letter-spacing:0.3px;">16</div><div class="t" style="left:536.00px;top:417.50px;width:200px;text-align:center;font-size:13px;line-height:13px;color:#222;font-weight:normal;letter-spacing:0.5px;">4/10/16 - 4/16/16</div><div class="t" style="left:743.00px;top:401.50px;width:200px;text-align:center;font-size:13px;line-height:13px;color:#222;font-weight:normal;letter-spacing:0.29px;">Thursday</div><div class="t" style="left:742.50px;top:432.50px;width:200px;text-align:center;font-size:13px;line-height:13px;color:#222;font-weight:normal;letter-spacing:0.52px;">4/14/16</div><div class="t" style="left:929.50px;top:401.50px;width:200px;text-align:center;font-size:13px;line-height:13px;color:#222;font-weight:normal;letter-spacing:0.3px;">Monday</div><div class="t" style="left:929.50px;top:432.50px;width:200px;text-align:center;font-size:13px;line-height:13px;color:#222;font-weight:normal;letter-spacing:0.52px;">4/18/16</div><div class="t" style="left:1135.30px;top:417.50px;width:200px;text-align:center;font-size:13px;line-height:13px;color:#222;font-weight:normal;letter-spacing:0.19px;">CAdmin</div><svg class="r" style="left:1416px;top:384.0px;" width="20" height="20" viewBox="0 0 20 20"><circle cx="10" cy="10" r="8.35" fill="none" stroke="#F5222D" stroke-width="2.3"/><path d="M6.8 7.1l6.4 5.8M13.2 7.1l-6.4 5.8" fill="none" stroke="#F5222D" stroke-width="2.3"/></svg><div class="t" style="left:1441.00px;top:387.00px;font-size:13px;line-height:13px;color:#222;font-weight:normal;letter-spacing:0px;">0</div><svg class="r" style="left:1416px;top:415.0px;" width="20" height="20" viewBox="0 0 20 20"><circle cx="10" cy="10" r="8.35" fill="none" stroke="#FF5A1A" stroke-width="2.3"/><path d="M10 4.4v5.2" stroke="#FF5A1A" stroke-width="2.4" stroke-linecap="round"/><circle cx="10" cy="14.1" r="1.5" fill="#FF5A1A"/></svg><div class="t" style="left:1441.00px;top:418.00px;font-size:13px;line-height:13px;color:#222;font-weight:normal;letter-spacing:0px;">0</div><svg class="r" style="left:1416px;top:446.0px;" width="20" height="20" viewBox="0 0 20 20"><circle cx="10" cy="10" r="8.35" fill="none" stroke="#1A62B5" stroke-width="2.3"/><circle cx="10.4" cy="6.6" r="1.3" fill="#1A62B5" opacity="0.8"/><path d="M10.4 9.2v5" stroke="#1A62B5" stroke-width="2.2" opacity="0.85"/><path d="M9 14.3h2.8" stroke="#1A62B5" stroke-width="1.4"/></svg><div class="t" style="left:1441.00px;top:449.00px;font-size:13px;line-height:13px;color:#222;font-weight:normal;letter-spacing:0px;">0</div><svg class="r" style="left:1619px;top:367px;" width="104" height="104" viewBox="0 0 104 104"><g transform="rotate(-90 52 52)"><circle cx="52" cy="52" r="46.8" fill="none" stroke="#E4E4E4" stroke-width="6.5"/><circle cx="52" cy="52" r="46.8" fill="none" stroke="#FFFFFF" stroke-opacity="0.75" stroke-width="6.6" stroke-dasharray="0.7 48.31" stroke-dashoffset="0.35"/></g></svg><div class="t" style="left:1773.00px;top:371.00px;font-size:13px;line-height:13px;color:#9A9A9A;font-weight:normal;letter-spacing:0.42px;">Calculated</div><div class="t" style="left:1773.00px;top:387.00px;font-size:13px;line-height:13px;color:#9A9A9A;font-weight:normal;letter-spacing:0.18px;">WFM</div><div class="t" style="left:1773.00px;top:403.00px;font-size:13px;line-height:13px;color:#9A9A9A;font-weight:normal;letter-spacing:0.35px;">Locked</div><div class="t" style="left:1773.00px;top:419.00px;font-size:13px;line-height:13px;color:#9A9A9A;font-weight:normal;letter-spacing:0.53px;">Validated</div><div class="t" style="left:1773.00px;top:435.00px;font-size:13px;line-height:13px;color:#9A9A9A;font-weight:normal;letter-spacing:0.6px;">Approved</div><div class="t" style="left:1773.00px;top:451.00px;font-size:13px;line-height:13px;color:#9A9A9A;font-weight:normal;letter-spacing:0.71px;">Commited</div><svg class="r" style="left:49px;top:533.5px;" width="18" height="19" viewBox="0 0 18 19"><path d="M17.6 0.9H1.2V18.1H17.6" fill="none" stroke="#9C9C9C" stroke-width="1.1"/><path d="M1.1 0.6v17.8" stroke="#3F7FCF" stroke-width="1.5"/></svg><svg class="r" style="left:135px;top:534px;" width="18" height="18" viewBox="0 0 18 18"><rect x="0.6" y="2.4" width="16.6" height="15.2" fill="none" stroke="#606060" stroke-width="1.2"/><rect x="0" y="1.8" width="17.8" height="3.4" fill="#606060"/><rect x="4.2" y="0" width="1.6" height="3" fill="#606060"/><rect x="12" y="0" width="1.6" height="3" fill="#606060"/><rect x="6.5" y="1" width="4.8" height="2" fill="#606060"/><rect x="1.8" y="6.6" width="1.8" height="1.2" fill="#606060" opacity="0.55"/><rect x="4.6" y="6.5" width="6.8" height="1.4" fill="#606060" opacity="0.85"/><rect x="12.3" y="6.6" width="1.8" height="1.2" fill="#606060" opacity="0.55"/><rect x="1.7" y="8.9" width="2.2" height="1.2" fill="#606060" opacity="0.9"/><rect x="6.8" y="8.9" width="2.2" height="1.2" fill="#606060" opacity="0.9"/><rect x="12.1" y="8.9" width="2.2" height="1.2" fill="#606060" opacity="0.9"/><rect x="4.9" y="8.8" width="1.3" height="1.4" fill="#606060" opacity="0.9"/><rect x="9.8" y="8.8" width="1.3" height="1.4" fill="#606060" opacity="0.9"/><rect x="1.7" y="11.3" width="2.2" height="1.2" fill="#606060" opacity="0.55"/><rect x="6.8" y="11.3" width="2.2" height="1.2" fill="#606060" opacity="0.55"/><rect x="12.1" y="11.3" width="2.2" height="1.2" fill="#606060" opacity="0.55"/><rect x="4.9" y="11.200000000000001" width="1.3" height="1.4" fill="#606060" opacity="0.55"/><rect x="9.8" y="11.200000000000001" width="1.3" height="1.4" fill="#606060" opacity="0.55"/><rect x="1.7" y="13.9" width="2.2" height="1.2" fill="#606060" opacity="0.9"/><rect x="6.8" y="13.9" width="2.2" height="1.2" fill="#606060" opacity="0.9"/><rect x="12.1" y="13.9" width="2.2" height="1.2" fill="#606060" opacity="0.9"/><rect x="4.9" y="13.8" width="1.3" height="1.4" fill="#606060" opacity="0.9"/><rect x="9.8" y="13.8" width="1.3" height="1.4" fill="#606060" opacity="0.9"/></svg><div class="t" style="left:160.00px;top:533.76px;font-size:18px;line-height:18px;color:#111;font-weight:bold;letter-spacing:0.11px;">CAN - Weekly</div><div class="t" style="left:397.50px;top:534.50px;width:100px;text-align:center;font-size:13px;line-height:13px;color:#333;font-weight:normal;letter-spacing:0.3px;">15</div><div class="t" style="left:536.00px;top:534.50px;width:200px;text-align:center;font-size:13px;line-height:13px;color:#222;font-weight:normal;letter-spacing:0.5px;">4/3/16 - 4/9/16</div><div class="t" style="left:743.00px;top:518.50px;width:200px;text-align:center;font-size:13px;line-height:13px;color:#222;font-weight:normal;letter-spacing:0.29px;">Thursday</div><div class="t" style="left:742.50px;top:549.50px;width:200px;text-align:center;font-size:13px;line-height:13px;color:#222;font-weight:normal;letter-spacing:0.52px;">4/7/16</div><div class="t" style="left:929.50px;top:518.50px;width:200px;text-align:center;font-size:13px;line-height:13px;color:#222;font-weight:normal;letter-spacing:0.3px;">Monday</div><div class="t" style="left:929.50px;top:549.50px;width:200px;text-align:center;font-size:13px;line-height:13px;color:#222;font-weight:normal;letter-spacing:0.52px;">4/11/16</div><div class="t" style="left:1135.30px;top:534.50px;width:200px;text-align:center;font-size:13px;line-height:13px;color:#222;font-weight:normal;letter-spacing:0.19px;">CAdmin</div><svg class="r" style="left:1416px;top:501.0px;" width="20" height="20" viewBox="0 0 20 20"><circle cx="10" cy="10" r="8.35" fill="none" stroke="#F5222D" stroke-width="2.3"/><path d="M6.8 7.1l6.4 5.8M13.2 7.1l-6.4 5.8" fill="none" stroke="#F5222D" stroke-width="2.3"/></svg><div class="t" style="left:1441.00px;top:504.00px;font-size:13px;line-height:13px;color:#222;font-weight:normal;letter-spacing:0px;">0</div><svg class="r" style="left:1416px;top:532.0px;" width="20" height="20" viewBox="0 0 20 20"><circle cx="10" cy="10" r="8.35" fill="none" stroke="#FF5A1A" stroke-width="2.3"/><path d="M10 4.4v5.2" stroke="#FF5A1A" stroke-width="2.4" stroke-linecap="round"/><circle cx="10" cy="14.1" r="1.5" fill="#FF5A1A"/></svg><div class="t" style="left:1441.00px;top:535.00px;font-size:13px;line-height:13px;color:#222;font-weight:normal;letter-spacing:0px;">0</div><svg class="r" style="left:1416px;top:563.0px;" width="20" height="20" viewBox="0 0 20 20"><circle cx="10" cy="10" r="8.35" fill="none" stroke="#1A62B5" stroke-width="2.3"/><circle cx="10.4" cy="6.6" r="1.3" fill="#1A62B5" opacity="0.8"/><path d="M10.4 9.2v5" stroke="#1A62B5" stroke-width="2.2" opacity="0.85"/><path d="M9 14.3h2.8" stroke="#1A62B5" stroke-width="1.4"/></svg><div class="t" style="left:1441.00px;top:566.00px;font-size:13px;line-height:13px;color:#222;font-weight:normal;letter-spacing:0px;">0</div><svg class="r" style="left:1619px;top:484px;" width="104" height="104" viewBox="0 0 104 104"><g transform="rotate(-90 52 52)"><circle cx="52" cy="52" r="46.8" fill="none" stroke="#E4E4E4" stroke-width="6.5"/><circle cx="52" cy="52" r="46.8" fill="none" stroke="#FFFFFF" stroke-opacity="0.75" stroke-width="6.6" stroke-dasharray="0.7 48.31" stroke-dashoffset="0.35"/></g></svg><div class="t" style="left:1773.00px;top:488.00px;font-size:13px;line-height:13px;color:#9A9A9A;font-weight:normal;letter-spacing:0.42px;">Calculated</div><div class="t" style="left:1773.00px;top:504.00px;font-size:13px;line-height:13px;color:#9A9A9A;font-weight:normal;letter-spacing:0.18px;">WFM</div><div class="t" style="left:1773.00px;top:520.00px;font-size:13px;line-height:13px;color:#9A9A9A;font-weight:normal;letter-spacing:0.35px;">Locked</div><div class="t" style="left:1773.00px;top:536.00px;font-size:13px;line-height:13px;color:#9A9A9A;font-weight:normal;letter-spacing:0.53px;">Validated</div><div class="t" style="left:1773.00px;top:552.00px;font-size:13px;line-height:13px;color:#9A9A9A;font-weight:normal;letter-spacing:0.6px;">Approved</div><div class="t" style="left:1773.00px;top:568.00px;font-size:13px;line-height:13px;color:#9A9A9A;font-weight:normal;letter-spacing:0.71px;">Commited</div><svg class="r" style="left:49px;top:651.5px;" width="18" height="19" viewBox="0 0 18 19"><path d="M17.6 0.9H1.2V18.1H17.6" fill="none" stroke="#9C9C9C" stroke-width="1.1"/><path d="M1.1 0.6v17.8" stroke="#3F7FCF" stroke-width="1.5"/></svg><svg class="r" style="left:135px;top:652px;" width="18" height="18" viewBox="0 0 18 18"><rect x="0.6" y="2.4" width="16.6" height="15.2" fill="none" stroke="#606060" stroke-width="1.2"/><rect x="0" y="1.8" width="17.8" height="3.4" fill="#606060"/><rect x="4.2" y="0" width="1.6" height="3" fill="#606060"/><rect x="12" y="0" width="1.6" height="3" fill="#606060"/><rect x="6.5" y="1" width="4.8" height="2" fill="#606060"/><rect x="1.8" y="6.6" width="1.8" height="1.2" fill="#606060" opacity="0.55"/><rect x="4.6" y="6.5" width="6.8" height="1.4" fill="#606060" opacity="0.85"/><rect x="12.3" y="6.6" width="1.8" height="1.2" fill="#606060" opacity="0.55"/><rect x="1.7" y="8.9" width="2.2" height="1.2" fill="#606060" opacity="0.9"/><rect x="6.8" y="8.9" width="2.2" height="1.2" fill="#606060" opacity="0.9"/><rect x="12.1" y="8.9" width="2.2" height="1.2" fill="#606060" opacity="0.9"/><rect x="4.9" y="8.8" width="1.3" height="1.4" fill="#606060" opacity="0.9"/><rect x="9.8" y="8.8" width="1.3" height="1.4" fill="#606060" opacity="0.9"/><rect x="1.7" y="11.3" width="2.2" height="1.2" fill="#606060" opacity="0.55"/><rect x="6.8" y="11.3" width="2.2" height="1.2" fill="#606060" opacity="0.55"/><rect x="12.1" y="11.3" width="2.2" height="1.2" fill="#606060" opacity="0.55"/><rect x="4.9" y="11.200000000000001" width="1.3" height="1.4" fill="#606060" opacity="0.55"/><rect x="9.8" y="11.200000000000001" width="1.3" height="1.4" fill="#606060" opacity="0.55"/><rect x="1.7" y="13.9" width="2.2" height="1.2" fill="#606060" opacity="0.9"/><rect x="6.8" y="13.9" width="2.2" height="1.2" fill="#606060" opacity="0.9"/><rect x="12.1" y="13.9" width="2.2" height="1.2" fill="#606060" opacity="0.9"/><rect x="4.9" y="13.8" width="1.3" height="1.4" fill="#606060" opacity="0.9"/><rect x="9.8" y="13.8" width="1.3" height="1.4" fill="#606060" opacity="0.9"/></svg><div class="t" style="left:160.00px;top:651.76px;font-size:18px;line-height:18px;color:#111;font-weight:bold;letter-spacing:0.11px;">CAN - Weekly</div><div class="t" style="left:397.50px;top:651.50px;width:100px;text-align:center;font-size:13px;line-height:13px;color:#333;font-weight:normal;letter-spacing:0.3px;">14</div><div class="t" style="left:536.00px;top:651.50px;width:200px;text-align:center;font-size:13px;line-height:13px;color:#222;font-weight:normal;letter-spacing:0.5px;">3/27/16 - 4/2/16</div><div class="t" style="left:743.00px;top:635.50px;width:200px;text-align:center;font-size:13px;line-height:13px;color:#222;font-weight:normal;letter-spacing:0.29px;">Thursday</div><div class="t" style="left:742.50px;top:666.50px;width:200px;text-align:center;font-size:13px;line-height:13px;color:#222;font-weight:normal;letter-spacing:0.52px;">3/31/16</div><div class="t" style="left:929.50px;top:635.50px;width:200px;text-align:center;font-size:13px;line-height:13px;color:#222;font-weight:normal;letter-spacing:0.3px;">Monday</div><div class="t" style="left:929.50px;top:666.50px;width:200px;text-align:center;font-size:13px;line-height:13px;color:#222;font-weight:normal;letter-spacing:0.52px;">4/4/16</div><div class="t" style="left:1135.30px;top:651.50px;width:200px;text-align:center;font-size:13px;line-height:13px;color:#222;font-weight:normal;letter-spacing:0.19px;">CAdmin</div><svg class="r" style="left:1416px;top:617.3px;" width="20" height="20" viewBox="0 0 20 20"><circle cx="10" cy="10" r="8.35" fill="none" stroke="#F5222D" stroke-width="2.3"/><path d="M6.8 7.1l6.4 5.8M13.2 7.1l-6.4 5.8" fill="none" stroke="#F5222D" stroke-width="2.3"/></svg><div class="t" style="left:1441.00px;top:621.00px;font-size:13px;line-height:13px;color:#222;font-weight:normal;letter-spacing:0px;">0</div><svg class="r" style="left:1416px;top:648.3px;" width="20" height="20" viewBox="0 0 20 20"><circle cx="10" cy="10" r="8.35" fill="none" stroke="#FF5A1A" stroke-width="2.3"/><path d="M10 4.4v5.2" stroke="#FF5A1A" stroke-width="2.4" stroke-linecap="round"/><circle cx="10" cy="14.1" r="1.5" fill="#FF5A1A"/></svg><div class="t" style="left:1441.00px;top:652.00px;font-size:13px;line-height:13px;color:#222;font-weight:normal;letter-spacing:0px;">0</div><svg class="r" style="left:1416px;top:679.3px;" width="20" height="20" viewBox="0 0 20 20"><circle cx="10" cy="10" r="8.35" fill="none" stroke="#1A62B5" stroke-width="2.3"/><circle cx="10.4" cy="6.6" r="1.3" fill="#1A62B5" opacity="0.8"/><path d="M10.4 9.2v5" stroke="#1A62B5" stroke-width="2.2" opacity="0.85"/><path d="M9 14.3h2.8" stroke="#1A62B5" stroke-width="1.4"/></svg><div class="t" style="left:1441.00px;top:683.00px;font-size:13px;line-height:13px;color:#222;font-weight:normal;letter-spacing:0px;">0</div><svg class="r" style="left:1619px;top:602px;" width="104" height="104" viewBox="0 0 104 104"><g transform="rotate(-90 52 52)"><circle cx="52" cy="52" r="46.8" fill="none" stroke="#E4E4E4" stroke-width="6.5"/><circle cx="52" cy="52" r="46.8" fill="none" stroke="#FFFFFF" stroke-opacity="0.75" stroke-width="6.6" stroke-dasharray="0.7 48.31" stroke-dashoffset="0.35"/></g></svg><div class="t" style="left:1773.00px;top:606.00px;font-size:13px;line-height:13px;color:#9A9A9A;font-weight:normal;letter-spacing:0.42px;">Calculated</div><div class="t" style="left:1773.00px;top:622.00px;font-size:13px;line-height:13px;color:#9A9A9A;font-weight:normal;letter-spacing:0.18px;">WFM</div><div class="t" style="left:1773.00px;top:638.00px;font-size:13px;line-height:13px;color:#9A9A9A;font-weight:normal;letter-spacing:0.35px;">Locked</div><div class="t" style="left:1773.00px;top:654.00px;font-size:13px;line-height:13px;color:#9A9A9A;font-weight:normal;letter-spacing:0.53px;">Validated</div><div class="t" style="left:1773.00px;top:670.00px;font-size:13px;line-height:13px;color:#9A9A9A;font-weight:normal;letter-spacing:0.6px;">Approved</div><div class="t" style="left:1773.00px;top:686.00px;font-size:13px;line-height:13px;color:#9A9A9A;font-weight:normal;letter-spacing:0.71px;">Commited</div><div class="r" style="left:26px;top:717px;width:1848px;height:1px;background:#BBBBBB;"></div><svg class="r" style="left:49px;top:741.5px;" width="18" height="19" viewBox="0 0 18 19"><path d="M17.6 0.9H1.2V18.1H17.6" fill="none" stroke="#9C9C9C" stroke-width="1.1"/><path d="M1.1 0.6v17.8" stroke="#3F7FCF" stroke-width="1.5"/></svg><svg class="r" style="left:101px;top:742px;" width="8" height="8" viewBox="0 0 8 8"><path d="M7.5 0.5V7H0.5z" fill="#222"/></svg><div class="t" style="left:116.00px;top:741.76px;font-size:18px;line-height:18px;color:#111;font-weight:bold;letter-spacing:0.36px;">United Kingdom</div><div class="r" style="left:26px;top:774px;width:1848px;height:1px;background:#BBBBBB;"></div><svg class="r" style="left:49px;top:825.5px;" width="18" height="19" viewBox="0 0 18 19"><path d="M17.6 0.9H1.2V18.1H17.6" fill="none" stroke="#9C9C9C" stroke-width="1.1"/><path d="M1.1 0.6v17.8" stroke="#3F7FCF" stroke-width="1.5"/></svg><svg class="r" style="left:135px;top:826px;" width="18" height="18" viewBox="0 0 18 18"><rect x="0.6" y="2.4" width="16.6" height="15.2" fill="none" stroke="#606060" stroke-width="1.2"/><rect x="0" y="1.8" width="17.8" height="3.4" fill="#606060"/><rect x="4.2" y="0" width="1.6" height="3" fill="#606060"/><rect x="12" y="0" width="1.6" height="3" fill="#606060"/><rect x="6.5" y="1" width="4.8" height="2" fill="#606060"/><rect x="1.8" y="6.6" width="1.8" height="1.2" fill="#606060" opacity="0.55"/><rect x="4.6" y="6.5" width="6.8" height="1.4" fill="#606060" opacity="0.85"/><rect x="12.3" y="6.6" width="1.8" height="1.2" fill="#606060" opacity="0.55"/><rect x="1.7" y="8.9" width="2.2" height="1.2" fill="#606060" opacity="0.9"/><rect x="6.8" y="8.9" width="2.2" height="1.2" fill="#606060" opacity="0.9"/><rect x="12.1" y="8.9" width="2.2" height="1.2" fill="#606060" opacity="0.9"/><rect x="4.9" y="8.8" width="1.3" height="1.4" fill="#606060" opacity="0.9"/><rect x="9.8" y="8.8" width="1.3" height="1.4" fill="#606060" opacity="0.9"/><rect x="1.7" y="11.3" width="2.2" height="1.2" fill="#606060" opacity="0.55"/><rect x="6.8" y="11.3" width="2.2" height="1.2" fill="#606060" opacity="0.55"/><rect x="12.1" y="11.3" width="2.2" height="1.2" fill="#606060" opacity="0.55"/><rect x="4.9" y="11.200000000000001" width="1.3" height="1.4" fill="#606060" opacity="0.55"/><rect x="9.8" y="11.200000000000001" width="1.3" height="1.4" fill="#606060" opacity="0.55"/><rect x="1.7" y="13.9" width="2.2" height="1.2" fill="#606060" opacity="0.9"/><rect x="6.8" y="13.9" width="2.2" height="1.2" fill="#606060" opacity="0.9"/><rect x="12.1" y="13.9" width="2.2" height="1.2" fill="#606060" opacity="0.9"/><rect x="4.9" y="13.8" width="1.3" height="1.4" fill="#606060" opacity="0.9"/><rect x="9.8" y="13.8" width="1.3" height="1.4" fill="#606060" opacity="0.9"/></svg><div class="t" style="left:160.00px;top:825.76px;font-size:18px;line-height:18px;color:#111;font-weight:bold;letter-spacing:0.11px;">UK - Weekly</div><div class="t" style="left:397.50px;top:826.50px;width:100px;text-align:center;font-size:13px;line-height:13px;color:#333;font-weight:normal;letter-spacing:0.3px;">16</div><div class="t" style="left:536.00px;top:826.50px;width:200px;text-align:center;font-size:13px;line-height:13px;color:#222;font-weight:normal;letter-spacing:0.5px;">4/10/16 - 4/16/16</div><div class="t" style="left:743.00px;top:810.50px;width:200px;text-align:center;font-size:13px;line-height:13px;color:#222;font-weight:normal;letter-spacing:0.29px;">Thursday</div><div class="t" style="left:742.50px;top:841.50px;width:200px;text-align:center;font-size:13px;line-height:13px;color:#222;font-weight:normal;letter-spacing:0.52px;">4/14/16</div><div class="t" style="left:929.50px;top:810.50px;width:200px;text-align:center;font-size:13px;line-height:13px;color:#222;font-weight:normal;letter-spacing:0.3px;">Monday</div><div class="t" style="left:929.50px;top:841.50px;width:200px;text-align:center;font-size:13px;line-height:13px;color:#222;font-weight:normal;letter-spacing:0.52px;">4/18/16</div><div class="t" style="left:1135.30px;top:826.50px;width:200px;text-align:center;font-size:13px;line-height:13px;color:#222;font-weight:normal;letter-spacing:0.19px;">CAdmin</div><svg class="r" style="left:1416px;top:792.0px;" width="20" height="20" viewBox="0 0 20 20"><circle cx="10" cy="10" r="8.35" fill="none" stroke="#F5222D" stroke-width="2.3"/><path d="M6.8 7.1l6.4 5.8M13.2 7.1l-6.4 5.8" fill="none" stroke="#F5222D" stroke-width="2.3"/></svg><div class="t" style="left:1441.00px;top:795.00px;font-size:13px;line-height:13px;color:#222;font-weight:normal;letter-spacing:0px;">0</div><svg class="r" style="left:1416px;top:823.0px;" width="20" height="20" viewBox="0 0 20 20"><circle cx="10" cy="10" r="8.35" fill="none" stroke="#FF5A1A" stroke-width="2.3"/><path d="M10 4.4v5.2" stroke="#FF5A1A" stroke-width="2.4" stroke-linecap="round"/><circle cx="10" cy="14.1" r="1.5" fill="#FF5A1A"/></svg><div class="t" style="left:1441.00px;top:826.00px;font-size:13px;line-height:13px;color:#222;font-weight:normal;letter-spacing:0px;">0</div><svg class="r" style="left:1416px;top:854.0px;" width="20" height="20" viewBox="0 0 20 20"><circle cx="10" cy="10" r="8.35" fill="none" stroke="#1A62B5" stroke-width="2.3"/><circle cx="10.4" cy="6.6" r="1.3" fill="#1A62B5" opacity="0.8"/><path d="M10.4 9.2v5" stroke="#1A62B5" stroke-width="2.2" opacity="0.85"/><path d="M9 14.3h2.8" stroke="#1A62B5" stroke-width="1.4"/></svg><div class="t" style="left:1441.00px;top:857.00px;font-size:13px;line-height:13px;color:#222;font-weight:normal;letter-spacing:0px;">0</div><svg class="r" style="left:1619px;top:776px;" width="104" height="104" viewBox="0 0 104 104"><g transform="rotate(-90 52 52)"><circle cx="52" cy="52" r="46.8" fill="none" stroke="#E4E4E4" stroke-width="6.5"/><circle cx="52" cy="52" r="46.8" fill="none" stroke="#FFFFFF" stroke-opacity="0.75" stroke-width="6.6" stroke-dasharray="0.7 48.31" stroke-dashoffset="0.35"/></g></svg><div class="t" style="left:1773.00px;top:780.00px;font-size:13px;line-height:13px;color:#9A9A9A;font-weight:normal;letter-spacing:0.42px;">Calculated</div><div class="t" style="left:1773.00px;top:796.00px;font-size:13px;line-height:13px;color:#9A9A9A;font-weight:normal;letter-spacing:0.18px;">WFM</div><div class="t" style="left:1773.00px;top:812.00px;font-size:13px;line-height:13px;color:#9A9A9A;font-weight:normal;letter-spacing:0.35px;">Locked</div><div class="t" style="left:1773.00px;top:828.00px;font-size:13px;line-height:13px;color:#9A9A9A;font-weight:normal;letter-spacing:0.53px;">Validated</div><div class="t" style="left:1773.00px;top:844.00px;font-size:13px;line-height:13px;color:#9A9A9A;font-weight:normal;letter-spacing:0.6px;">Approved</div><div class="t" style="left:1773.00px;top:860.00px;font-size:13px;line-height:13px;color:#9A9A9A;font-weight:normal;letter-spacing:0.71px;">Commited</div></div><div class="r" style="left:1874px;top:286px;width:17px;height:808px;background:#F0F0F0;"></div><div class="r" style="left:1877px;top:350px;width:13px;height:384px;background:#BEBEBE;"></div><svg class="r" style="left:1879px;top:292px;" width="10" height="7" viewBox="0 0 10 7"><path d="M0.5 5.5h8.6l-4.3-4.6z" fill="#444"/></svg><svg class="r" style="left:1878px;top:1083px;" width="10" height="7" viewBox="0 0 10 7"><path d="M0.6 1.2h9l-4.5 5z" fill="#444"/></svg></body></html>
